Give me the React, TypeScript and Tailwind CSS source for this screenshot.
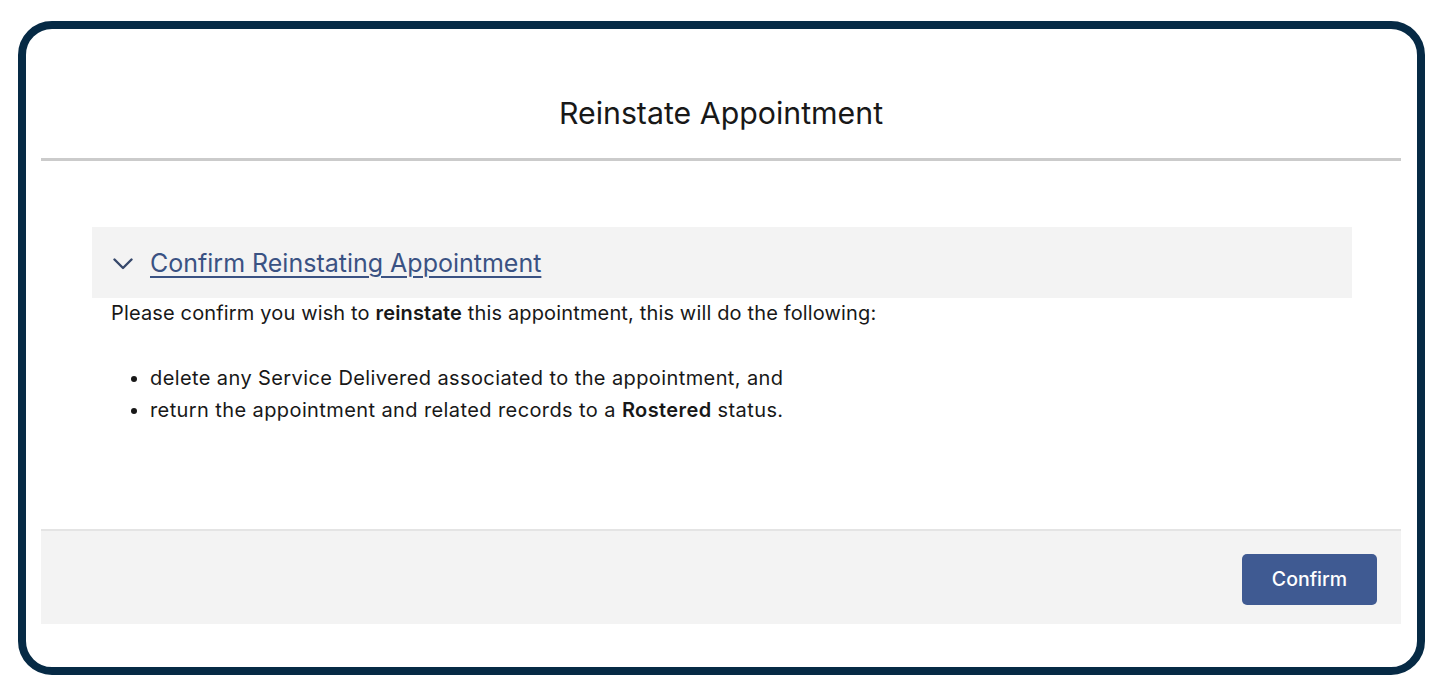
const font = { fontFamily: 'Inter, "Liberation Sans", Arial, sans-serif' };

export default function App() {
  return (
    <div className="h-[693px] w-[1441px] bg-white pl-[18px] pt-[21px]" style={font}>
      <div className="flex h-[654px] w-[1407px] flex-col rounded-[34px] border-8 border-[#062a45] bg-white pb-[43px] pl-[15px] pr-[16px] pt-[38px]">
        <div className="flex flex-1 flex-col">
          {/* Header */}
          <div className="flex h-[94px] items-center justify-center border-b-[3px] border-[#cbcbcb]">
            <h1 className="pt-[2px] text-[30.3px] leading-none text-[#181818]">Reinstate Appointment</h1>
          </div>

          {/* Body */}
          <div className="flex-1 px-[51px] pr-[49px] pt-[66px]">
            <div className="flex h-[71px] items-center gap-[17px] bg-[#f3f3f3] pl-[21px]">
              <svg width="20" height="12" viewBox="0 0 20 12" fill="none" className="mt-[2px]">
                <path d="M1.5 1.5 10 10l8.5-8.5" stroke="#36486b" strokeWidth="2.4" strokeLinecap="round" strokeLinejoin="round" />
              </svg>
              <a href="#" className="pt-[2px] text-[25px] leading-none text-[#3a5283] underline decoration-[1.5px] underline-offset-[4px]">
                Confirm Reinstating Appointment
              </a>
            </div>
            <div className="pl-[19px] text-[20px] text-[#181818]">
              <p className="mt-[1px] leading-[28px] tracking-[0.15px]">
                Please confirm you wish to <b className="font-semibold">reinstate</b> this appointment, this will do the following:
              </p>
              <ul className="mt-[35px] list-disc pl-[39px] leading-[32px] tracking-[0.4px]">
                <li>delete any Service Delivered associated to the appointment, and</li>
                <li>
                  return the appointment and related records to a <b className="font-semibold">Rostered</b> status.
                </li>
              </ul>
            </div>
          </div>

          {/* Footer */}
          <div className="flex h-[95px] items-start justify-end border-t-2 border-[#e4e4e4] bg-[#f3f3f3] pr-[24px] pt-[23px]">
            <button
              type="button"
              className="h-[51px] w-[135px] rounded-[5px] bg-[#3f5a92] text-[19.5px] font-medium text-white"
            >
              Confirm
            </button>
          </div>
        </div>
      </div>
    </div>
  );
}
